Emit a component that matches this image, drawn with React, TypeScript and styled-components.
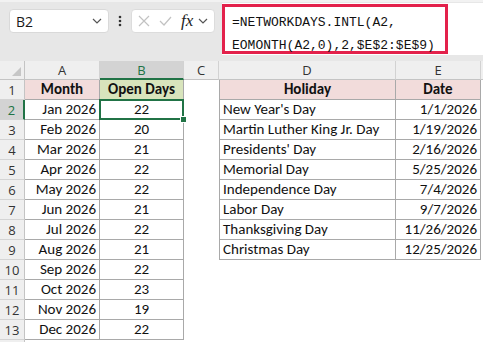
import React from "react";
import styled, { createGlobalStyle } from "styled-components";

const GREEN = "#217346";
const CELL_FONT = `"Carlito", "Lato", "Liberation Sans", sans-serif`;
const UI_FONT = `"Open Sans", "Noto Sans", "Liberation Sans", sans-serif`;

const months = [
  ["Jan 2026", 22],
  ["Feb 2026", 20],
  ["Mar 2026", 21],
  ["Apr 2026", 22],
  ["May 2026", 22],
  ["Jun 2026", 21],
  ["Jul 2026", 22],
  ["Aug 2026", 21],
  ["Sep 2026", 22],
  ["Oct 2026", 23],
  ["Nov 2026", 19],
  ["Dec 2026", 22],
] as const;

const holidays = [
  ["New Year's Day", "1/1/2026"],
  ["Martin Luther King Jr. Day", "1/19/2026"],
  ["Presidents' Day", "2/16/2026"],
  ["Memorial Day", "5/25/2026"],
  ["Independence Day", "7/4/2026"],
  ["Labor Day", "9/7/2026"],
  ["Thanksgiving Day", "11/26/2026"],
  ["Christmas Day", "12/25/2026"],
];

const GlobalStyle = createGlobalStyle`
  body {
    margin: 0;
    background: #fff;
    font-family: ${UI_FONT};
    overflow: hidden;
  }
`;

const Chevron = () => (
  <svg width="10" height="6" viewBox="0 0 10 6">
    <path d="M1 1l4 4 4-4" fill="none" stroke="#555" strokeWidth="1.2" />
  </svg>
);

export default function App() {
  return (
    <>
      <GlobalStyle />
      <Toolbar>
        <NameBox>
          <NameText>B2</NameText>
          <Chevron />
        </NameBox>
        <Dots>
          <svg width="4" height="12" viewBox="0 0 4 12">
            <circle cx="2" cy="2" r="1.3" fill="#333" />
            <circle cx="2" cy="6" r="1.3" fill="#333" />
            <circle cx="2" cy="10" r="1.3" fill="#333" />
          </svg>
        </Dots>
        <FnBox>
          <svg width="12" height="12" viewBox="0 0 12 12">
            <path d="M1 1l10 10M11 1L1 11" stroke="#c2c2c2" strokeWidth="1.2" />
          </svg>
          <svg width="13" height="10" viewBox="0 0 13 10">
            <path d="M1 5l4 4 7-8" fill="none" stroke="#c2c2c2" strokeWidth="1.2" />
          </svg>
          <FxText>fx</FxText>
          <Chevron />
        </FnBox>
        <FormulaArea>
          <Highlight>
            =NETWORKDAYS.INTL(A2,
            <br />
            EOMONTH(A2,0),2,$E$2:$E$9)
          </Highlight>
        </FormulaArea>
      </Toolbar>

      <Sheet>
        <Corner>
          <svg width="9" height="9" viewBox="0 0 9 9">
            <path d="M9 0v9H0z" fill="#c6c6c6" />
          </svg>
        </Corner>
        {["A", "B", "C", "D", "E", ""].map((c) => (
          <ColHead key={c || "x"} $selected={c === "B"}>
            {c}
          </ColHead>
        ))}

        <RowHead>1</RowHead>
        <Cell $bg="#f2dcdb" $bold $align="center" $boxed>
          Month
        </Cell>
        <Cell $bg="#d8e4bc" $bold $align="center" $boxed>
          Open Days
        </Cell>
        <Cell />
        <Cell $bg="#f2dcdb" $bold $align="center" $boxed $leftEdge>
          Holiday
        </Cell>
        <Cell $bg="#f2dcdb" $bold $align="center" $boxed>
          Date
        </Cell>
        <Cell />

        {months.map(([m, d], i) => {
          const row = i + 2;
          const h = holidays[i];
          return (
            <React.Fragment key={m}>
              <RowHead $selected={row === 2}>{row}</RowHead>
              <Cell $align="right" $boxed>
                {m}
              </Cell>
              <Cell $align="center" $boxed $active={row === 2}>
                {d}
                {row === 2 && <FillHandle />}
              </Cell>
              <Cell />
              <Cell $boxed={!!h} $leftEdge={!!h}>
                {h ? h[0] : ""}
              </Cell>
              <Cell $align="right" $boxed={!!h}>
                {h ? h[1] : ""}
              </Cell>
              <Cell />
            </React.Fragment>
          );
        })}

        <RowHead />
        <Cell />
        <Cell />
        <Cell />
        <Cell />
        <Cell />
        <Cell />
      </Sheet>
    </>
  );
}

const Toolbar = styled.div`
  display: flex;
  align-items: flex-start;
  height: 61px;
  background: #e7e7e7;
  border-top: 2px solid #f2f2f2;
  box-sizing: border-box;
`;

const NameBox = styled.div`
  margin: 7px 0 0 9px;
  width: 100px;
  height: 24px;
  box-sizing: border-box;
  background: #fff;
  border: 1px solid #d9d9d9;
  border-radius: 4px;
  display: flex;
  align-items: center;
  justify-content: space-between;
  padding: 0 6px 0 6px;
`;

const NameText = styled.span`
  font-size: 14px;
  color: #1a1a1a;
`;

const Dots = styled.div`
  width: 22px;
  height: 24px;
  margin-top: 7px;
  display: flex;
  align-items: center;
  justify-content: center;
`;

const FnBox = styled.div`
  margin-top: 7px;
  width: 84px;
  height: 24px;
  box-sizing: border-box;
  background: #fff;
  border: 1px solid #dcdcdc;
  border-radius: 4px;
  display: flex;
  align-items: center;
  gap: 9px;
  padding: 0 4px 0 6px;
`;

const FxText = styled.span`
  font-family: "Liberation Serif", "DejaVu Serif", serif;
  font-style: italic;
  font-size: 17px;
  color: #222;
  margin-right: -4px;
`;

const FormulaArea = styled.div`
  flex: 1;
  margin: 1px 0 0 7px;
  height: 52px;
  background: #fff;
  padding-top: 1px;
  box-sizing: border-box;
`;

const Highlight = styled.div`
  width: 226px;
  height: 50px;
  box-sizing: border-box;
  border: 3px solid #e3214b;
  padding: 4px 7px 0;
  font-family: "Liberation Mono", "DejaVu Sans Mono", monospace;
  font-size: 13px;
  line-height: 23px;
  color: #111;
  white-space: nowrap;
`;

const Sheet = styled.div`
  display: grid;
  grid-template-columns: 25px 75px 84px 35px 177px 85px 1fr;
  grid-template-rows: 19px repeat(14, 20px);
`;

const Corner = styled.div`
  background: #efefef;
  border-right: 1px solid #c4c4c4;
  border-bottom: 1px solid #c4c4c4;
  box-sizing: border-box;
  display: flex;
  align-items: flex-end;
  justify-content: flex-end;
  padding: 0 3px 3px 0;
`;

const ColHead = styled.div<{ $selected?: boolean }>`
  box-sizing: border-box;
  background: ${(p) => (p.$selected ? "#d3d3d3" : "#efefef")};
  color: ${(p) => (p.$selected ? GREEN : "#333")};
  border-right: 1px solid #d2d2d2;
  border-bottom: ${(p) => (p.$selected ? `2px solid ${GREEN}` : "1px solid #c4c4c4")};
  font-size: 13px;
  display: flex;
  align-items: center;
  justify-content: center;
`;

const RowHead = styled.div<{ $selected?: boolean }>`
  box-sizing: border-box;
  background: ${(p) => (p.$selected ? "#d3d3d3" : "#efefef")};
  color: ${(p) => (p.$selected ? GREEN : "#333")};
  border-right: ${(p) => (p.$selected ? `2px solid ${GREEN}` : "1px solid #c4c4c4")};
  border-bottom: 1px solid #d4d4d4;
  font-size: 13px;
  display: flex;
  align-items: center;
  justify-content: center;
`;

const Cell = styled.div<{
  $bg?: string;
  $bold?: boolean;
  $align?: "left" | "center" | "right";
  $boxed?: boolean;
  $leftEdge?: boolean;
  $active?: boolean;
}>`
  position: relative;
  box-sizing: border-box;
  background: ${(p) => p.$bg || "#fff"};
  font-family: ${CELL_FONT};
  font-size: 15px;
  font-weight: ${(p) => (p.$bold ? 700 : 400)};
  color: #111;
  text-align: ${(p) => p.$align || "left"};
  line-height: 19px;
  padding: 0 3px;
  white-space: nowrap;
  border-right: ${(p) => (p.$boxed ? "1px solid #a9a9a9" : "none")};
  border-bottom: ${(p) => (p.$boxed ? "1px solid #a9a9a9" : "none")};
  border-left: ${(p) => (p.$leftEdge ? "1px solid #a9a9a9" : "none")};
  ${(p) =>
    p.$active &&
    `&::after {
      content: "";
      position: absolute;
      inset: -1px -1px -1px -1px;
      border: 2px solid ${GREEN};
      pointer-events: none;
    }`}
`;

const FillHandle = styled.span`
  position: absolute;
  right: -4px;
  bottom: -4px;
  width: 5px;
  height: 5px;
  background: ${GREEN};
  border: 1px solid #fff;
  z-index: 2;
`;
